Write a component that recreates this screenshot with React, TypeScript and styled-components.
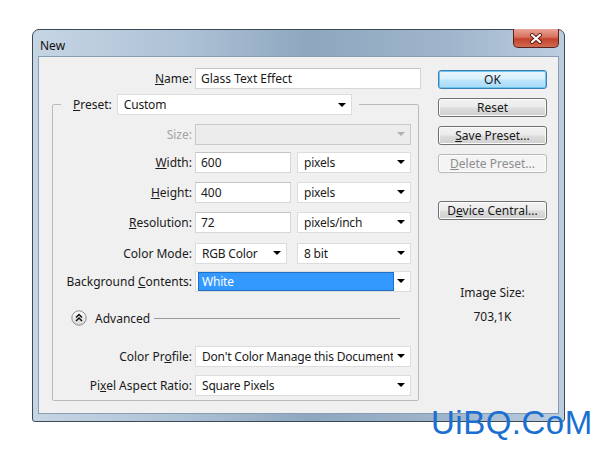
import React from "react";
import styled, { createGlobalStyle } from "styled-components";

const GlobalStyle = createGlobalStyle`
  html, body {
    margin: 0;
    padding: 0;
    background: #ffffff;
  }
  body {
    font-family: "Noto Sans", "Open Sans", sans-serif;
    font-size: 12px;
    color: #1a1a1a;
  }
`;

const Page = styled.div`
  position: relative;
  width: 600px;
  height: 450px;
  padding: 29px 0 0 32px;
  box-sizing: border-box;
  overflow: hidden;
`;

const Window = styled.div`
  width: 533px;
  height: 393px;
  box-sizing: border-box;
  border: 1px solid #3b4856;
  border-radius: 7px 7px 3px 3px;
  background: linear-gradient(
    90deg,
    #c6d5e4 0%,
    #aec2d6 28%,
    #8ea7bf 52%,
    #9fb5cb 78%,
    #bccde0 100%
  );
  display: flex;
  flex-direction: column;
  padding: 0 5px 7px 5px;
`;

const TitleBar = styled.div`
  height: 26px;
  display: flex;
  justify-content: space-between;
  align-items: flex-start;
`;

const Title = styled.div`
  padding: 8px 0 0 2px;
  line-height: 15px;
  color: #111;
`;

const CloseButton = styled.div`
  width: 46px;
  height: 19px;
  margin: -1px 0 0 0;
  box-sizing: border-box;
  border: 1px solid #5b2219;
  border-top: none;
  border-radius: 0 0 5px 5px;
  background: linear-gradient(180deg, #e8a496 0%, #d9715d 45%, #c2442c 55%, #cf6a52 100%);
  display: flex;
  align-items: center;
  justify-content: center;
`;

const Panel = styled.div`
  flex: 1;
  display: flex;
  background: #f0f0f0;
  border: 1px solid #8a9eb3;
  box-sizing: border-box;
`;

const FormColumn = styled.div`
  width: 383px;
  display: flex;
  flex-direction: column;
`;

const NameRow = styled.div`
  display: flex;
  align-items: center;
  height: 21px;
  margin-top: 11px;
`;

const Label = styled.span<{ $w: number; $disabled?: boolean }>`
  width: ${(p) => p.$w}px;
  flex: none;
  box-sizing: border-box;
  padding-right: 3px;
  text-align: right;
  white-space: nowrap;
  color: ${(p) => (p.$disabled ? "#a3a3a3" : "#1a1a1a")};
`;

const TextBox = styled.div<{ $w: number }>`
  width: ${(p) => p.$w}px;
  height: 21px;
  flex: none;
  box-sizing: border-box;
  border: 1px solid #d6d6d6;
  border-top-color: #c4c4c4;
  background: #fff;
  padding: 0 5px;
  line-height: 19px;
  white-space: nowrap;
`;

const SelectBox = styled.div<{ $w: number; $disabled?: boolean }>`
  width: ${(p) => p.$w}px;
  height: 21px;
  flex: none;
  box-sizing: border-box;
  border: 1px solid ${(p) => (p.$disabled ? "#c9c9c9" : "#dcdcdc")};
  background: ${(p) => (p.$disabled ? "#ececec" : "#fff")};
  display: flex;
  align-items: center;
  padding: 0 5px 0 2px;
  gap: 3px;
`;

const SelectValue = styled.span<{ $selected?: boolean }>`
  flex: 1;
  height: 17px;
  line-height: 17px;
  padding: 0 2px 0 3px;
  white-space: nowrap;
  overflow: hidden;
  letter-spacing: -0.2px;
  background: ${(p) => (p.$selected ? "#3399fe" : "transparent")};
  border: 1px solid ${(p) => (p.$selected ? "#1f6fc4" : "transparent")};
  color: ${(p) => (p.$selected ? "#fff" : "inherit")};
`;

const Arrow = styled.span<{ $disabled?: boolean }>`
  flex: none;
  width: 0;
  height: 0;
  border-left: 4px solid transparent;
  border-right: 4px solid transparent;
  border-top: 4px solid ${(p) => (p.$disabled ? "#b0b0b0" : "#000")};
`;

const Group = styled.fieldset`
  margin: 5px 0 0 13px;
  width: 367px;
  box-sizing: border-box;
  padding: 0 0 5px 0;
  border: 1px solid #b7bcc0;
  border-radius: 2px;
`;

const Legend = styled.legend`
  display: flex;
  align-items: center;
  gap: 5px;
  margin-left: 8px;
  padding: 0 7px 0 12px;
`;

const Row = styled.div<{ $mt: number }>`
  display: flex;
  align-items: center;
  height: 20px;
  margin-top: ${(p) => p.$mt}px;
`;

const Controls = styled.div<{ $gap: number }>`
  display: flex;
  gap: ${(p) => p.$gap}px;
`;

const AdvancedRow = styled.div`
  display: flex;
  align-items: center;
  height: 20px;
  margin-top: 17px;
  padding-left: 18px;
  gap: 8px;
`;

const Rule = styled.div`
  flex: 1;
  height: 1px;
  background: #9c9c9c;
  margin: 0 18px 0 -4px;
`;

const ButtonColumn = styled.div`
  width: 109px;
  margin-left: 16px;
  padding-top: 13px;
  display: flex;
  flex-direction: column;
`;

const Button = styled.div<{ $primary?: boolean; $disabled?: boolean; $mt?: number }>`
  height: 19px;
  margin-top: ${(p) => p.$mt ?? 9}px;
  box-sizing: border-box;
  border: 1px solid
    ${(p) => (p.$primary ? "#3c7fb1" : p.$disabled ? "#b5b9bc" : "#707070")};
  border-radius: 3px;
  background: ${(p) =>
    p.$primary
      ? "linear-gradient(180deg, #eaf6fd 0%, #d9f0fc 48%, #bee6fd 52%, #a7d9f5 100%)"
      : p.$disabled
      ? "#f4f4f4"
      : "linear-gradient(180deg, #f2f2f2 0%, #ebebeb 48%, #dddddd 52%, #cfcfcf 100%)"};
  box-shadow: ${(p) => (p.$primary ? "inset 0 0 0 1px #6fc3ef" : "inset 0 0 0 1px #fcfcfc")};
  color: ${(p) => (p.$disabled ? "#8d8d8d" : "#1a1a1a")};
  text-align: center;
  line-height: 17px;
  white-space: nowrap;
  &:first-child {
    margin-top: 0;
  }
`;

const ImageSize = styled.div`
  margin-top: 65px;
  text-align: center;
  line-height: 15px;
  display: flex;
  flex-direction: column;
  gap: 9px;
`;

const Watermark = styled.div`
  position: absolute;
  left: 431px;
  top: 403px;
  font-family: "Liberation Sans", sans-serif;
  font-size: 33px;
  line-height: 40px;
  color: #1a6fd0;
  letter-spacing: 0.5px;
`;

const CloseIcon = () => (
  <svg width="14" height="11" viewBox="0 0 14 11">
    <path d="M3 2 L11 9 M11 2 L3 9" stroke="#5a1a10" strokeWidth="4" strokeLinecap="round" />
    <path d="M3 2 L11 9 M11 2 L3 9" stroke="#ffffff" strokeWidth="2.2" strokeLinecap="round" />
  </svg>
);

const CollapseIcon = () => (
  <svg width="16" height="16" viewBox="0 0 16 16">
    <defs>
      <linearGradient id="cg" x1="0" y1="0" x2="0" y2="1">
        <stop offset="0" stopColor="#ffffff" />
        <stop offset="1" stopColor="#d6d6d6" />
      </linearGradient>
    </defs>
    <circle cx="8" cy="8" r="7.2" fill="url(#cg)" stroke="#8f8f8f" />
    <path d="M5 7.5 L8 4.5 L11 7.5 M5 11 L8 8 L11 11" fill="none" stroke="#111" strokeWidth="1.5" />
  </svg>
);

const Select: React.FC<{ w: number; value?: string; disabled?: boolean; selected?: boolean }> = ({
  w,
  value = "",
  disabled,
  selected,
}) => (
  <SelectBox $w={w} $disabled={disabled}>
    <SelectValue $selected={selected}>{value}</SelectValue>
    <Arrow $disabled={disabled} />
  </SelectBox>
);

export default function App() {
  return (
    <Page>
      <GlobalStyle />
      <Window>
        <TitleBar>
          <Title>New</Title>
          <CloseButton>
            <CloseIcon />
          </CloseButton>
        </TitleBar>
        <Panel>
          <FormColumn>
            <NameRow>
              <Label $w={156}>
                <u>N</u>ame:
              </Label>
              <TextBox $w={226}>Glass Text Effect</TextBox>
            </NameRow>
            <Group>
              <Legend>
                <span>
                  <u>P</u>reset:
                </span>
                <Select w={235} value="Custom" />
              </Legend>
              <Row $mt={9}>
                <Label $w={142} $disabled>
                  Size:
                </Label>
                <Select w={216} disabled />
              </Row>
              <Row $mt={8}>
                <Label $w={142}>
                  <u>W</u>idth:
                </Label>
                <Controls $gap={6}>
                  <TextBox $w={96}>600</TextBox>
                  <Select w={114} value="pixels" />
                </Controls>
              </Row>
              <Row $mt={10}>
                <Label $w={142}>
                  <u>H</u>eight:
                </Label>
                <Controls $gap={6}>
                  <TextBox $w={96}>400</TextBox>
                  <Select w={114} value="pixels" />
                </Controls>
              </Row>
              <Row $mt={10}>
                <Label $w={142}>
                  <u>R</u>esolution:
                </Label>
                <Controls $gap={6}>
                  <TextBox $w={96}>72</TextBox>
                  <Select w={114} value="pixels/inch" />
                </Controls>
              </Row>
              <Row $mt={11}>
                <Label $w={142}>Color Mode:</Label>
                <Controls $gap={10}>
                  <Select w={92} value="RGB Color" />
                  <Select w={114} value="8 bit" />
                </Controls>
              </Row>
              <Row $mt={8}>
                <Label $w={142}>
                  Background <u>C</u>ontents:
                </Label>
                <Select w={216} value="White" selected />
              </Row>
              <AdvancedRow>
                <CollapseIcon />
                <span>Advanced</span>
                <Rule />
              </AdvancedRow>
              <Row $mt={18}>
                <Label $w={142}>
                  Color Pr<u>o</u>file:
                </Label>
                <Select w={216} value="Don't Color Manage this Document" />
              </Row>
              <Row $mt={9}>
                <Label $w={142}>
                  Pi<u>x</u>el Aspect Ratio:
                </Label>
                <Select w={216} value="Square Pixels" />
              </Row>
            </Group>
          </FormColumn>
          <ButtonColumn>
            <Button $primary>OK</Button>
            <Button>Reset</Button>
            <Button>
              <u>S</u>ave Preset...
            </Button>
            <Button $disabled>
              <u>D</u>elete Preset...
            </Button>
            <Button $mt={28}>
              D<u>e</u>vice Central...
            </Button>
            <ImageSize>
              <span>Image Size:</span>
              <span>703,1K</span>
            </ImageSize>
          </ButtonColumn>
        </Panel>
      </Window>
      <Watermark>UiBQ.CoM</Watermark>
    </Page>
  );
}
